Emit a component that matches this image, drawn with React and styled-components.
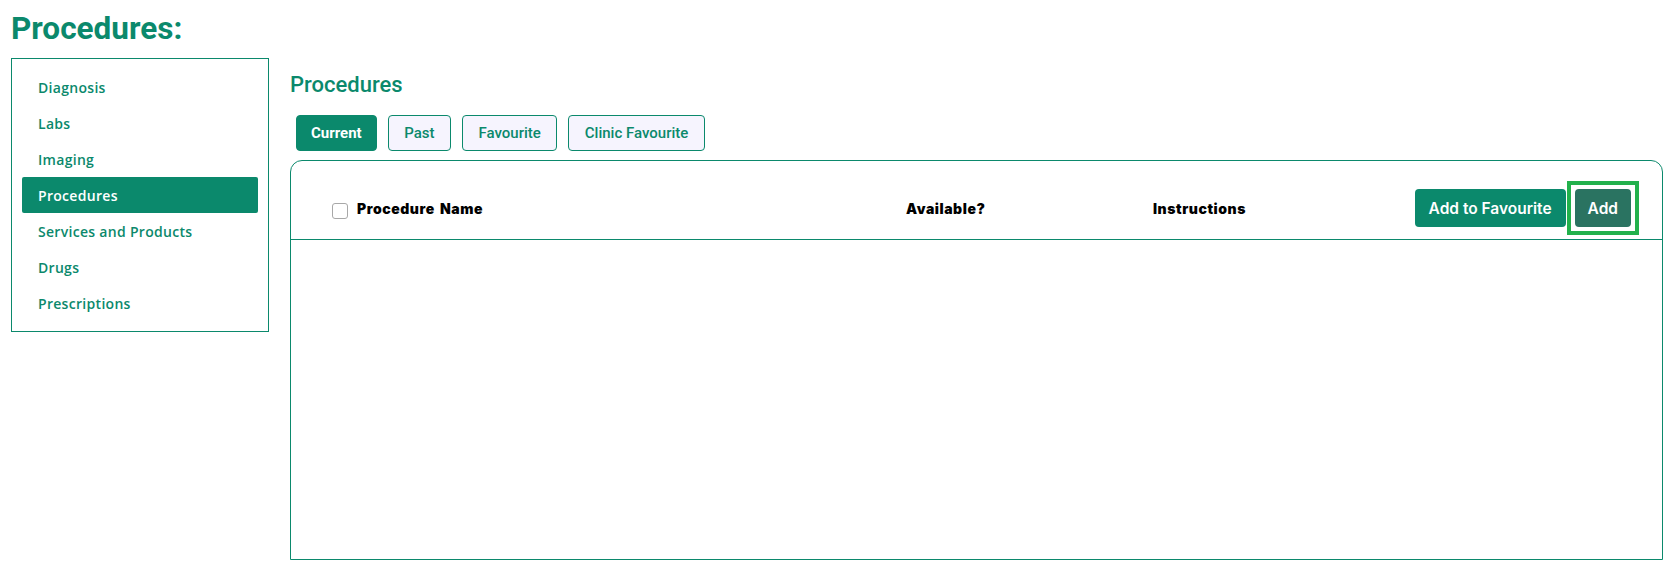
import React from "react";
import styled, { createGlobalStyle } from "styled-components";

const TEAL = "#0b896c";

const Global = createGlobalStyle`
  html, body { margin: 0; padding: 0; background: #ffffff; }
  body { font-family: Roboto, "Liberation Sans", sans-serif; }
  * { box-sizing: border-box; }
`;

const Page = styled.div`
  padding: 11px 10px 0 11px;
`;

const Title = styled.h1`
  margin: 0;
  font-family: Roboto, "Liberation Sans", sans-serif;
  font-weight: 700;
  font-size: 31.5px;
  line-height: 36px;
  color: ${TEAL};
`;

const Layout = styled.div`
  display: grid;
  grid-template-columns: 258px 1fr;
  column-gap: 21px;
  margin-top: 11px;
  align-items: start;
`;

const Sidebar = styled.nav`
  border: 1px solid ${TEAL};
  padding: 10px;
  display: flex;
  flex-direction: column;
`;

const NavItem = styled.div`
  height: 36px;
  display: flex;
  align-items: center;
  padding-left: 16px;
  border-radius: 2px;
  font-family: "Open Sans", "Noto Sans", sans-serif;
  font-weight: 600;
  font-size: 14px;
  letter-spacing: 0.3px;
  color: ${(p) => (p.$active ? "#ffffff" : TEAL)};
  background: ${(p) => (p.$active ? TEAL : "transparent")};
`;

const Main = styled.main`
  padding-top: 13px;
  display: flex;
  flex-direction: column;
`;

const SectionTitle = styled.h2`
  margin: 0;
  font-family: Roboto, "Liberation Sans", sans-serif;
  font-weight: 500;
  font-size: 22px;
  line-height: 28px;
  color: ${TEAL};
`;

const Tabs = styled.div`
  display: flex;
  gap: 11px;
  margin-top: 16px;
  padding-left: 6px;
`;

const Tab = styled.button`
  height: 36px;
  padding: 0 ${(p) => (p.$active ? 14 : 15.5)}px;
  border-radius: 4px;
  border: 1px solid ${TEAL};
  background: ${(p) => (p.$active ? TEAL : "#f6f4fe")};
  color: ${(p) => (p.$active ? "#ffffff" : TEAL)};
  font-family: Roboto, "Liberation Sans", sans-serif;
  font-weight: ${(p) => (p.$active ? 700 : 500)};
  font-size: 15px;
  cursor: pointer;
`;

const Card = styled.section`
  margin-top: 9px;
  height: 400px;
  border: 1px solid ${TEAL};
  border-radius: 12px 12px 0 0;
  display: flex;
  flex-direction: column;
`;

const HeaderRow = styled.div`
  height: 79px;
  border-bottom: 1px solid ${TEAL};
  display: flex;
  align-items: center;
  padding: 16px 31px 0 41px;
`;

const HeaderCell = styled.div`
  display: flex;
  align-items: center;
  gap: 9px;
  width: ${(p) => p.$w || "auto"};
  flex: ${(p) => (p.$grow ? 1 : "none")};
  padding-left: ${(p) => p.$pl || 0}px;
  font-family: Inter, Roboto, sans-serif;
  font-weight: 900;
  font-size: 14px;
  letter-spacing: 0.55px;
  word-spacing: 2px;
  color: #000000;
`;

const Check = styled.span`
  width: 16px;
  height: 16px;
  border: 1px solid #a8a8a8;
  border-radius: 3px;
  background: #fff;
  margin-top: 6px;
  flex: none;
`;

const Actions = styled.div`
  display: flex;
  gap: 9px;
  align-items: center;
`;

const FocusRing = styled.span`
  position: relative;
  display: inline-flex;
  &::after {
    content: "";
    position: absolute;
    inset: -8px;
    border: 4px solid #22b14c;
    pointer-events: none;
  }
`;

const ActionButton = styled.button`
  height: 38px;
  padding: 0 ${(p) => (p.$dark ? 13 : 14)}px;
  border: none;
  border-radius: 4px;
  background: ${(p) => (p.$dark ? "#2a7361" : TEAL)};
  color: #ffffff;
  font-family: Inter, Roboto, sans-serif;
  font-weight: 600;
  font-size: 15.5px;
  cursor: pointer;
`;

const navItems = [
  "Diagnosis",
  "Labs",
  "Imaging",
  "Procedures",
  "Services and Products",
  "Drugs",
  "Prescriptions",
];

const tabs = ["Current", "Past", "Favourite", "Clinic Favourite"];

export default function App() {
  return (
    <Page>
      <Global />
      <Title>Procedures:</Title>
      <Layout>
        <Sidebar>
          {navItems.map((n) => (
            <NavItem key={n} $active={n === "Procedures"}>
              {n}
            </NavItem>
          ))}
        </Sidebar>
        <Main>
          <SectionTitle>Procedures</SectionTitle>
          <Tabs>
            {tabs.map((t) => (
              <Tab key={t} $active={t === "Current"}>
                {t}
              </Tab>
            ))}
          </Tabs>
          <Card>
            <HeaderRow>
              <HeaderCell $w="574px">
                <Check />
                Procedure Name
              </HeaderCell>
              <HeaderCell $w="246px">Available?</HeaderCell>
              <HeaderCell $grow $pl={1}>Instructions</HeaderCell>
              <Actions>
                <ActionButton>Add to Favourite</ActionButton>
                <FocusRing>
                  <ActionButton $dark>Add</ActionButton>
                </FocusRing>
              </Actions>
            </HeaderRow>
          </Card>
        </Main>
      </Layout>
    </Page>
  );
}
